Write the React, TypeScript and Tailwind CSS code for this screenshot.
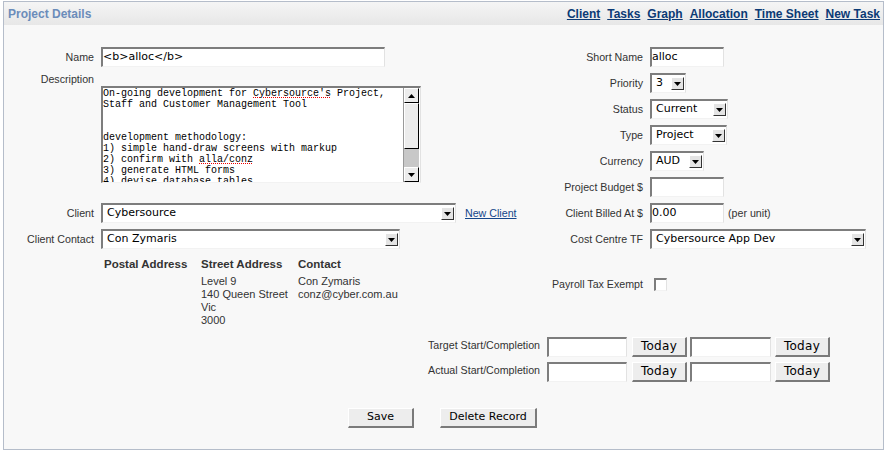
import clsx from "clsx";

const inset =
  "border-t-2 border-l-2 border-r border-b border-t-[#7d7d7d] border-l-[#7d7d7d] border-r-[#e2e2e2] border-b-[#f2f2f2] bg-white";
const ctl = "font-['DejaVu_Sans',Verdana,sans-serif] text-[11px] text-black";
const raised =
  "border-t border-l border-r-2 border-b-2 border-t-white border-l-white border-r-[#7a7a7a] border-b-[#7a7a7a] bg-[#ededed]";

function Tri({ up }: { up?: boolean }) {
  return (
    <svg width="7" height="4" viewBox="0 0 7 4">
      <path d={up ? "M3.5 0L7 4H0z" : "M0 0h7L3.5 4z"} fill="#000" />
    </svg>
  );
}

function TextBox({ className, value }: { className: string; value?: string }) {
  return <div className={clsx("flex h-[20px] items-center", inset, ctl, className)}>{value}</div>;
}

function Select({ className, value }: { className: string; value: string }) {
  return (
    <div className={clsx("flex h-[20px] items-center justify-between pl-[4px] pr-[1px]", inset, ctl, className)}>
      <span>{value}</span>
      <span className="flex h-[13px] w-[13px] items-center justify-center border border-t-white border-l-white border-r-[#333] border-b-[#333] bg-[#e4e4e4]">
        <Tri />
      </span>
    </div>
  );
}

function Btn({ className, children }: { className: string; children: React.ReactNode }) {
  return (
    <button className={clsx("flex h-[20px] items-center justify-center", raised, ctl, className)}>{children}</button>
  );
}

function Label({ className, children }: { className?: string; children: React.ReactNode }) {
  return <div className={clsx("self-center pr-[7px] text-right leading-[13px]", className)}>{children}</div>;
}

const description = [
  <>
    On-going development for <span className="underline decoration-dotted decoration-[#e00]">Cybersource's</span> Project,
  </>,
  "Staff and Customer Management Tool",
  "",
  "",
  "development methodology:",
  "1) simple hand-draw screens with markup",
  <>
    2) confirm with <span className="underline decoration-dotted decoration-[#e00]">alla/conz</span>
  </>,
  "3) generate HTML forms",
  "4) devise database tables",
];

function TextArea() {
  return (
    <div className={clsx("col-start-2 row-start-2 row-span-5 mt-[13px] flex h-[97px] w-[320px] self-start overflow-hidden", inset)}>
      <div className="flex-1 overflow-hidden font-['Liberation_Mono','Courier_New',monospace] text-[10px] leading-[11px] text-black">
        {description.map((line, i) => (
          <div key={i} className="h-[11px] whitespace-pre">
            {line}
          </div>
        ))}
      </div>
      <div className="mr-[1px] flex w-[16px] flex-col border-l border-l-[#9a9a9a]">
        <div className="flex h-[15px] items-center justify-center border border-t-white border-l-white border-r-black border-b-black bg-[#ececec]">
          <Tri up />
        </div>
        <div className="h-[46px] border border-t-white border-l-white border-r-black border-b-black bg-[#ececec]" />
        <div className="flex-1 bg-[#c8c8c8]" />
        <div className="flex h-[15px] items-center justify-center border border-t-white border-l-white border-r-black border-b-black bg-[#ececec]">
          <Tri />
        </div>
      </div>
    </div>
  );
}

const links = ["Client", "Tasks", "Graph", "Allocation", "Time Sheet", "New Task"];

export default function App() {
  return (
    <div className="min-h-screen bg-white pl-[3px] pt-[1px] font-['Liberation_Sans',Arial,sans-serif] text-[10.67px] text-[#333]">
      <div className="flex h-[449px] w-[881px] flex-col border border-[#b5bdca] bg-[#f8f8f8]">
        <div className="flex h-[23px] items-center justify-between bg-gradient-to-b from-[#f5f5f5] to-[#e7e7e7] pl-[4px] pr-[3px]">
          <span className="text-[12px] font-bold text-[#6b8cba]">Project Details</span>
          <div className="flex gap-[7px] text-[12px] font-bold text-[#0b3a75]">
            {links.map((l) => (
              <a key={l} href="#" className="underline">
                {l}
              </a>
            ))}
          </div>
        </div>

        <div className="pt-[22px]">
          <div className="grid grid-cols-[97px_444px_105px_230px] grid-rows-[repeat(8,20px)] gap-y-[6px]">
            <Label className="col-start-1 row-start-1">Name</Label>
            <TextBox className="col-start-2 row-start-1 w-[284px]" value="<b>alloc</b>" />
            <Label className="col-start-3 row-start-1">Short Name</Label>
            <TextBox className="col-start-4 row-start-1 w-[74px]" value="alloc" />

            <Label className="col-start-1 row-start-2 row-span-5 self-start">Description</Label>
            <TextArea />

            <Label className="col-start-3 row-start-2">Priority</Label>
            <Select className="col-start-4 row-start-2 w-[36px]" value="3" />
            <Label className="col-start-3 row-start-3">Status</Label>
            <Select className="col-start-4 row-start-3 w-[78px]" value="Current" />
            <Label className="col-start-3 row-start-4">Type</Label>
            <Select className="col-start-4 row-start-4 w-[77px]" value="Project" />
            <Label className="col-start-3 row-start-5">Currency</Label>
            <Select className="col-start-4 row-start-5 w-[54px]" value="AUD" />
            <Label className="col-start-3 row-start-6">Project Budget $</Label>
            <TextBox className="col-start-4 row-start-6 w-[74px]" />

            <Label className="col-start-1 row-start-7">Client</Label>
            <div className="col-start-2 row-start-7 flex items-center">
              <Select className="w-[355px]" value="Cybersource" />
              <a href="#" className="ml-[9px] text-[#15468a] underline">
                New Client
              </a>
            </div>
            <Label className="col-start-3 row-start-7">Client Billed At $</Label>
            <div className="col-start-4 row-start-7 flex items-center">
              <TextBox className="w-[74px]" value="0.00" />
              <span className="ml-[4px]">(per unit)</span>
            </div>

            <Label className="col-start-1 row-start-8">Client Contact</Label>
            <Select className="col-start-2 row-start-8 w-[299px]" value="Con Zymaris" />
            <Label className="col-start-3 row-start-8">Cost Centre TF</Label>
            <Select className="col-start-4 row-start-8 w-[216px]" value="Cybersource App Dev" />
          </div>

          <div className="mt-[9px] flex">
            <div className="w-[541px] pl-[100px]">
              <div className="grid grid-cols-[97px_97px_auto] text-[11px] leading-[13px]">
                <div className="text-[11.5px] font-bold">Postal Address</div>
                <div className="text-[11.5px] font-bold">Street Address</div>
                <div className="text-[11.5px] font-bold">Contact</div>
                <div className="mt-[4px]" />
                <div className="mt-[4px]">
                  Level 9
                  <br />
                  140 Queen Street
                  <br />
                  Vic
                  <br />
                  3000
                </div>
                <div className="mt-[4px]">
                  Con Zymaris
                  <br />
                  conz@cyber.com.au
                </div>
              </div>
            </div>
            <div className="mt-[20px] flex h-[13px] items-center self-start">
              <div className="w-[105px] pr-[7px] text-right leading-[13px]">Payroll Tax Exempt</div>
              <div className={clsx("ml-[4px] h-[13px] w-[13px]", inset)} />
            </div>
          </div>

          <div className="mt-[10px] flex flex-col gap-[6px]">
            {["Target Start/Completion", "Actual Start/Completion"].map((l) => (
              <div key={l} className="flex h-[19px] items-center">
                <div className="w-[543px] pb-[3px] pr-[7px] text-right leading-[13px]">{l}</div>
                <TextBox className="h-[19px] w-[80px]" />
                <Btn className="ml-[5px] h-[19px] w-[55px] text-[12px] tracking-[0.3px]">Today</Btn>
                <TextBox className="ml-[3px] h-[19px] w-[81px]" />
                <Btn className="ml-[4px] h-[19px] w-[55px] text-[12px] tracking-[0.3px]">Today</Btn>
              </div>
            ))}
          </div>

          <div className="mt-[27px] flex pl-[344px]">
            <Btn className="w-[66px]">Save</Btn>
            <Btn className="ml-[26px] w-[97px]">Delete Record</Btn>
          </div>
        </div>
      </div>
    </div>
  );
}
